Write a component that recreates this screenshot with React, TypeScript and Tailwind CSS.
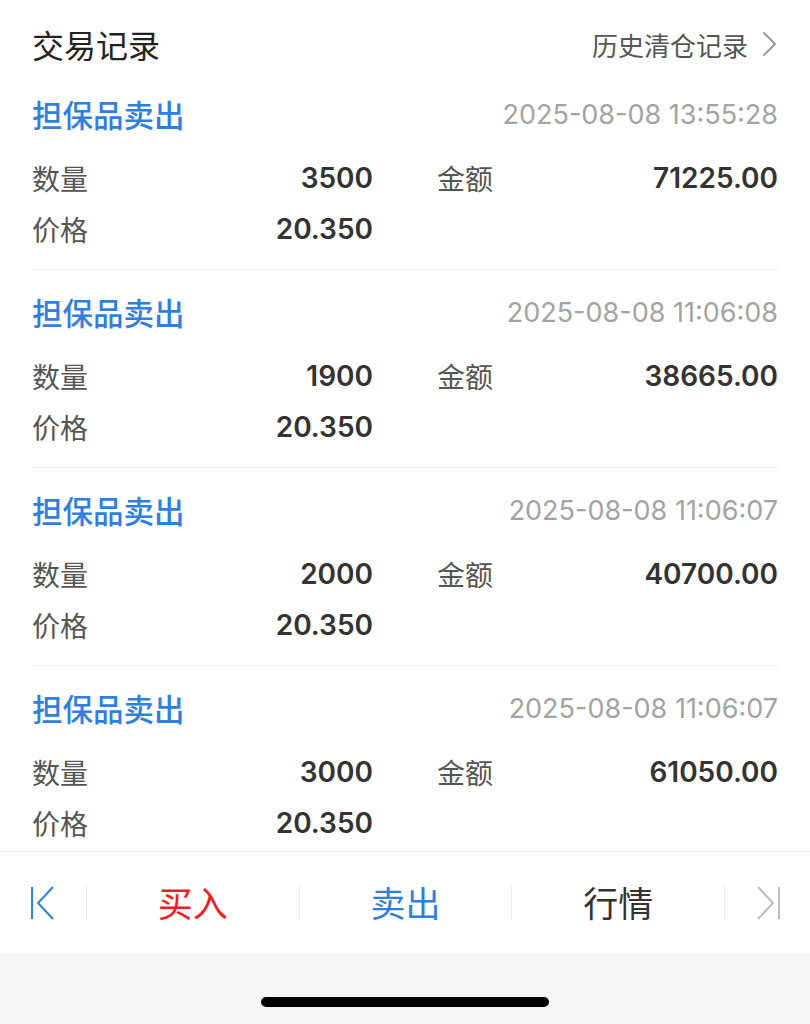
import React from "react";

const records = [
  { time: "2025-08-08 13:55:28", qty: "3500", amt: "71225.00", price: "20.350" },
  { time: "2025-08-08 11:06:08", qty: "1900", amt: "38665.00", price: "20.350" },
  { time: "2025-08-08 11:06:07", qty: "2000", amt: "40700.00", price: "20.350" },
  { time: "2025-08-08 11:06:07", qty: "3000", amt: "61050.00", price: "20.350" },
];

const cjk = "font-['Noto_Sans_CJK_SC',sans-serif]";
const num = "font-['Inter','Noto_Sans_CJK_SC',sans-serif]";

function Record({ r }: { r: (typeof records)[number] }) {
  return (
    <div className="border-b border-[#f0f0f0] pb-[20px]">
      <div className="flex h-[86px] items-center justify-between">
        <span className={`${cjk} text-[30.5px] font-medium text-[#2f7fe0]`}>担保品卖出</span>
        <span className={`${num} text-[27px] text-[#a3a3a3]`}>{r.time}</span>
      </div>
      <div className="flex h-[40px] items-center">
        <div className="flex w-[341px] items-center justify-between">
          <span className={`${cjk} text-[28px] text-[#555]`}>数量</span>
          <span className={`${num} text-[28px] font-semibold text-[#333]`}>{r.qty}</span>
        </div>
        <div className="ml-[64px] flex flex-1 items-center justify-between">
          <span className={`${cjk} text-[28px] text-[#555]`}>金额</span>
          <span className={`${num} text-[28px] font-semibold text-[#333]`}>{r.amt}</span>
        </div>
      </div>
      <div className="mt-[11px] flex h-[40px] items-center">
        <div className="flex w-[341px] items-center justify-between">
          <span className={`${cjk} text-[28px] text-[#555]`}>价格</span>
          <span className={`${num} text-[28px] font-semibold text-[#333]`}>{r.price}</span>
        </div>
      </div>
    </div>
  );
}

function Sep() {
  return <div className="h-[35px] w-px bg-[#ececec]" />;
}

export default function App() {
  return (
    <div className="flex h-[1024px] w-[810px] flex-col overflow-hidden bg-white">
      <div className="flex-1 overflow-hidden px-[32px]">
        <div className="flex h-[72px] items-center justify-between pt-[16px]">
          <span className={`${cjk} text-[32px] text-[#222]`}>交易记录</span>
          <span className="flex items-center gap-[14px]">
            <span className={`${cjk} text-[26px] text-[#555]`}>历史清仓记录</span>
            <svg width="16" height="26" viewBox="0 0 16 26" fill="none">
              <path d="M2 2l11 11L2 24" stroke="#999" strokeWidth="2" strokeLinecap="round" strokeLinejoin="round" />
            </svg>
          </span>
        </div>
        {records.map((r, i) => (
          <Record key={i} r={r} />
        ))}
      </div>
      <div className="flex h-[102px] shrink-0 items-center border-t border-[#f0f0f0] bg-white">
        <div className="flex w-[86px] items-center justify-center">
          <svg width="26" height="34" viewBox="0 0 26 34" fill="none">
            <path d="M2 1v32" stroke="#2f7fe0" strokeWidth="2" />
            <path d="M23 1L8 17l15 16" stroke="#2f7fe0" strokeWidth="2" />
          </svg>
        </div>
        <Sep />
        <div className={`${cjk} flex flex-1 justify-center text-[35px] text-[#f21d1d]`}>买入</div>
        <Sep />
        <div className={`${cjk} flex flex-1 justify-center text-[35px] text-[#2f7fe0]`}>卖出</div>
        <Sep />
        <div className={`${cjk} flex flex-1 justify-center text-[35px] text-[#333]`}>行情</div>
        <Sep />
        <div className="flex w-[85px] items-center justify-center">
          <svg width="26" height="34" viewBox="0 0 26 34" fill="none">
            <path d="M3 1l15 16L3 33" stroke="#bbb" strokeWidth="2" />
            <path d="M24 1v32" stroke="#bbb" strokeWidth="2" />
          </svg>
        </div>
      </div>
      <div className="flex h-[71px] shrink-0 items-end justify-center bg-[#f5f6f8] pb-[17px]">
        <div className="h-[10px] w-[288px] rounded-full bg-black" />
      </div>
    </div>
  );
}
